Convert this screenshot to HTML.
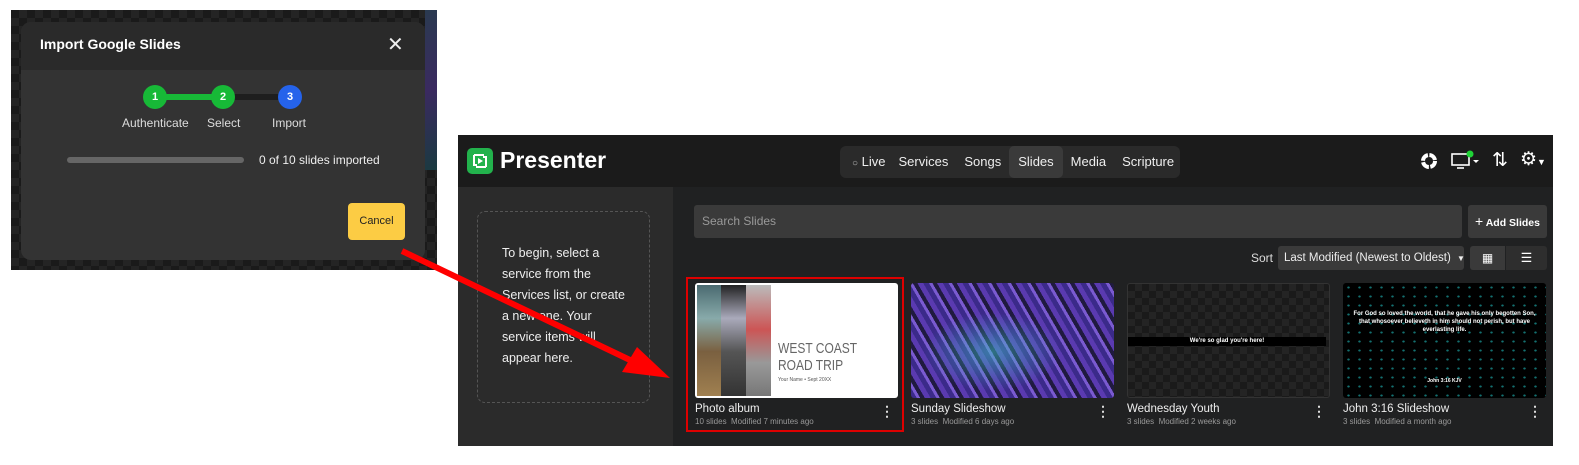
<!DOCTYPE html>
<html><head><style>
*{box-sizing:border-box;margin:0;padding:0}
body{width:1579px;height:465px;background:#fff;position:relative;overflow:hidden;font-family:"Liberation Sans",sans-serif;color:#eee}
.a{position:absolute}
.chk{background-color:#1a1a1a;background-image:linear-gradient(45deg,#242424 25%,transparent 25%,transparent 75%,#242424 75%),linear-gradient(45deg,#242424 25%,transparent 25%,transparent 75%,#242424 75%);background-size:16px 16px;background-position:0 0,8px 8px}
.circ{width:24px;height:24px;border-radius:50%;color:#fff;font-size:11px;font-weight:bold;text-align:center;line-height:24px}
.nav{white-space:nowrap}
.nav span{display:inline-block;padding:0 8px;line-height:32px;font-size:13px;color:#eee}
.card .t{font-size:11.5px;color:#eee;margin-top:5px}
.card .s{font-size:8px;color:#999;margin-top:2px}
.dots{position:absolute;right:4px;top:120px;font-size:14px;color:#ddd;font-weight:bold}
</style></head><body>
<div class="a chk" style="left:11px;top:10px;width:426px;height:260px"></div>
<div class="a" style="left:425px;top:10px;width:12px;height:160px;background:linear-gradient(160deg,#2a3a50,#3a2a60,#1a3a40)"></div>
<div class="a" style="left:21px;top:22px;width:404px;height:238px;background:#333;border-radius:10px;overflow:hidden">
 <div style="height:48px;background:#2a2a2a;padding:14px 19px;font-size:14px;font-weight:bold;color:#fff">Import Google Slides</div>
 <div class="a" style="left:366px;top:11px;font-size:20px;color:#eee;line-height:24px">✕</div>
 <div class="a" style="left:134px;top:72px;width:68px;height:6px;background:#17b937"></div>
 <div class="a" style="left:202px;top:72px;width:68px;height:6px;background:#1e1e1e"></div>
 <div class="a circ" style="left:122px;top:63px;background:#17b937">1</div>
 <div class="a circ" style="left:190px;top:63px;background:#17b937">2</div>
 <div class="a circ" style="left:257px;top:63px;background:#2563eb">3</div>
 <div class="a" style="left:101px;top:94px;font-size:12px;color:#ddd">Authenticate</div>
 <div class="a" style="left:186px;top:94px;font-size:12px;color:#ddd">Select</div>
 <div class="a" style="left:251px;top:94px;font-size:12px;color:#ddd">Import</div>
 <div class="a" style="left:46px;top:135px;width:177px;height:6px;border-radius:3px;background:#666"></div>
 <div class="a" style="left:238px;top:131px;font-size:12px;color:#eee">0 of 10 slides imported</div>
 <div class="a" style="left:327px;top:181px;width:57px;height:37px;background:#fccc44;border-radius:4px;color:#222;font-size:11px;text-align:center;line-height:37px">Cancel</div>
</div>
<div class="a" style="left:458px;top:135px;width:1095px;height:311px;background:#202122">
 <div class="a" style="left:0;top:0;width:1095px;height:52px;background:#1b1b1b"></div>
 <div class="a" style="left:9px;top:13px;width:26px;height:26px;background:#22b24c;border-radius:5px"></div>
 <svg class="a" style="left:13px;top:18px" width="18" height="16" viewBox="0 0 18 16"><path d="M3 2h10M3 2v10h3M15 14H5M15 14V4h-3" stroke="#fff" stroke-width="2" fill="none"/><path d="M7 5l5 3-5 3z" fill="#fff"/></svg>
 <div class="a" style="left:42px;top:12px;font-size:23px;font-weight:bold;color:#fff">Presenter</div>
 <div class="a nav" style="left:382px;top:11px;width:340px;height:32px;background:#2a2a2a;border-radius:6px;padding-left:4px">
  <span style="padding-right:5px"><span style="padding:0;font-size:10px;color:#bbb">○</span> Live</span><span>Services</span><span>Songs</span><span style="background:#3a3a3a;border-radius:5px;padding:0 9px">Slides</span><span>Media</span><span>Scripture</span>
 </div>
 <svg class="a" style="left:962px;top:17px" width="18" height="18" viewBox="0 0 18 18"><circle cx="9" cy="9" r="6" fill="none" stroke="#fff" stroke-width="4" stroke-dasharray="8 1.5"/></svg>
 <svg class="a" style="left:993px;top:15px" width="34" height="22" viewBox="0 0 34 22"><rect x="1" y="4" width="17" height="11" fill="none" stroke="#fff" stroke-width="1.6"/><path d="M6 18h7" stroke="#fff" stroke-width="1.6"/><circle cx="19" cy="4" r="3.5" fill="#1fd336"/><path d="M22 10l3 3 3-3z" fill="#fff"/></svg>
 <div class="a" style="left:1034px;top:14px;font-size:19px;color:#fff">⇅</div>
 <div class="a" style="left:1062px;top:13px;font-size:19px;color:#fff">⚙<span style="font-size:9px">▼</span></div>
 <div class="a" style="left:0;top:52px;width:215px;height:259px;background:#2b2b2b"></div>
 <div class="a" style="left:19px;top:76px;width:173px;height:192px;border:1px dashed #555;border-radius:8px;padding:31px 0 0 24px;font-size:12.5px;line-height:21px;color:#eee">To begin, select a<br>service from the<br>Services list, or create<br>a new one. Your<br>service items will<br>appear here.</div>
 <div class="a" style="left:236px;top:70px;width:768px;height:33px;background:#3a3a3a;border-radius:3px;padding:9px 8px;font-size:12px;color:#999">Search Slides</div>
 <div class="a" style="left:1010px;top:70px;width:79px;height:33px;background:#3a3a3a;border-radius:3px;font-size:10.5px;font-weight:bold;color:#fff;text-align:center;line-height:33px;white-space:nowrap"><span style="font-weight:normal;font-size:14px">+</span> Add Slides</div>
 <div class="a" style="left:793px;top:116px;font-size:12px;color:#ddd">Sort</div>
 <div class="a" style="left:820px;top:111px;width:186px;height:24px;background:#3a3a3a;border-radius:3px;font-size:11.5px;color:#eee;line-height:24px;padding-left:6px;white-space:nowrap">Last Modified (Newest to Oldest) <span style="font-size:8px;margin-left:3px">▼</span></div>
 <div class="a" style="left:1012px;top:111px;width:35px;height:24px;background:#3a3a3a;border-radius:3px 0 0 3px;color:#fff;font-size:12px;text-align:center;line-height:24px">▦</div>
 <div class="a" style="left:1048px;top:111px;width:41px;height:24px;background:#2e2e2e;border-radius:0 3px 3px 0;color:#fff;font-size:13px;text-align:center;line-height:24px">☰</div>
 <div class="a" style="left:228px;top:142px;width:218px;height:155px;border:2px solid #d00"></div>
 <div class="a card" style="left:237px;top:148px;width:203px">
  <div style="height:115px;background:#fff;border-radius:3px;position:relative;overflow:hidden">
   <div class="a" style="left:2px;top:2px;width:24px;height:111px;background:linear-gradient(#4a6a70,#8aa 30%,#7a6040 60%,#a08050)"></div>
   <div class="a" style="left:26px;top:2px;width:25px;height:111px;background:linear-gradient(#222,#aab 30%,#555 60%,#333)"></div>
   <div class="a" style="left:51px;top:2px;width:25px;height:111px;background:linear-gradient(#bbb,#c55 40%,#999 70%,#777)"></div>
   <div class="a" style="left:83px;top:57px;font-size:15px;color:#666;line-height:17px;transform:scaleX(.8);transform-origin:left">WEST COAST<br>ROAD TRIP</div>
   <div class="a" style="left:83px;top:94px;font-size:5px;color:#555">Your Name • Sept 20XX</div>
  </div>
  <div class="t">Photo album</div><div class="s">10 slides &nbsp;Modified 7 minutes ago</div><div class="dots">⋮</div>
 </div>
 <div class="a card" style="left:453px;top:148px;width:203px">
  <div style="height:115px;border-radius:3px;background:radial-gradient(ellipse at 40% 60%,rgba(60,200,200,.5),transparent 40%),repeating-linear-gradient(60deg,#3b2a8a 0 5px,#7a5ad0 5px 8px,#201a40 8px 12px,#5a3ab0 12px 17px)"></div>
  <div class="t">Sunday Slideshow</div><div class="s">3 slides &nbsp;Modified 6 days ago</div><div class="dots">⋮</div>
 </div>
 <div class="a card" style="left:669px;top:148px;width:203px">
  <div class="chk" style="height:115px;border-radius:3px;border:1px solid #333;position:relative;background-size:14px 14px;background-position:0 0,7px 7px">
   <div class="a" style="left:0;top:53px;width:198px;height:9px;background:#000;color:#fff;font-size:6px;text-align:center;line-height:9px;font-weight:bold">We're so glad you're here!</div>
  </div>
  <div class="t">Wednesday Youth</div><div class="s">3 slides &nbsp;Modified 2 weeks ago</div><div class="dots">⋮</div>
 </div>
 <div class="a card" style="left:885px;top:148px;width:203px">
  <div style="height:115px;border-radius:3px;background:#000 radial-gradient(#137070 1px,transparent 1.5px);background-size:11px 9px;position:relative">
   <div class="a" style="left:10px;top:27px;width:183px;font-size:6px;color:#fff;text-align:center;font-weight:bold;line-height:8px">For God so loved the world, that he gave his only begotten Son, that whosoever believeth in him should not perish, but have everlasting life.</div>
   <div class="a" style="left:0;top:95px;width:203px;font-size:5px;color:#fff;text-align:center;font-weight:bold">John 3:16 KJV</div>
  </div>
  <div class="t">John 3:16 Slideshow</div><div class="s">3 slides &nbsp;Modified a month ago</div><div class="dots">⋮</div>
 </div>
</div>
<svg class="a" style="left:0;top:0" width="1579" height="465"><path d="M402 251L630 360" stroke="#f00" stroke-width="6"/><path d="M670 378L622 372L637 347z" fill="#f00"/></svg>
</body></html>
